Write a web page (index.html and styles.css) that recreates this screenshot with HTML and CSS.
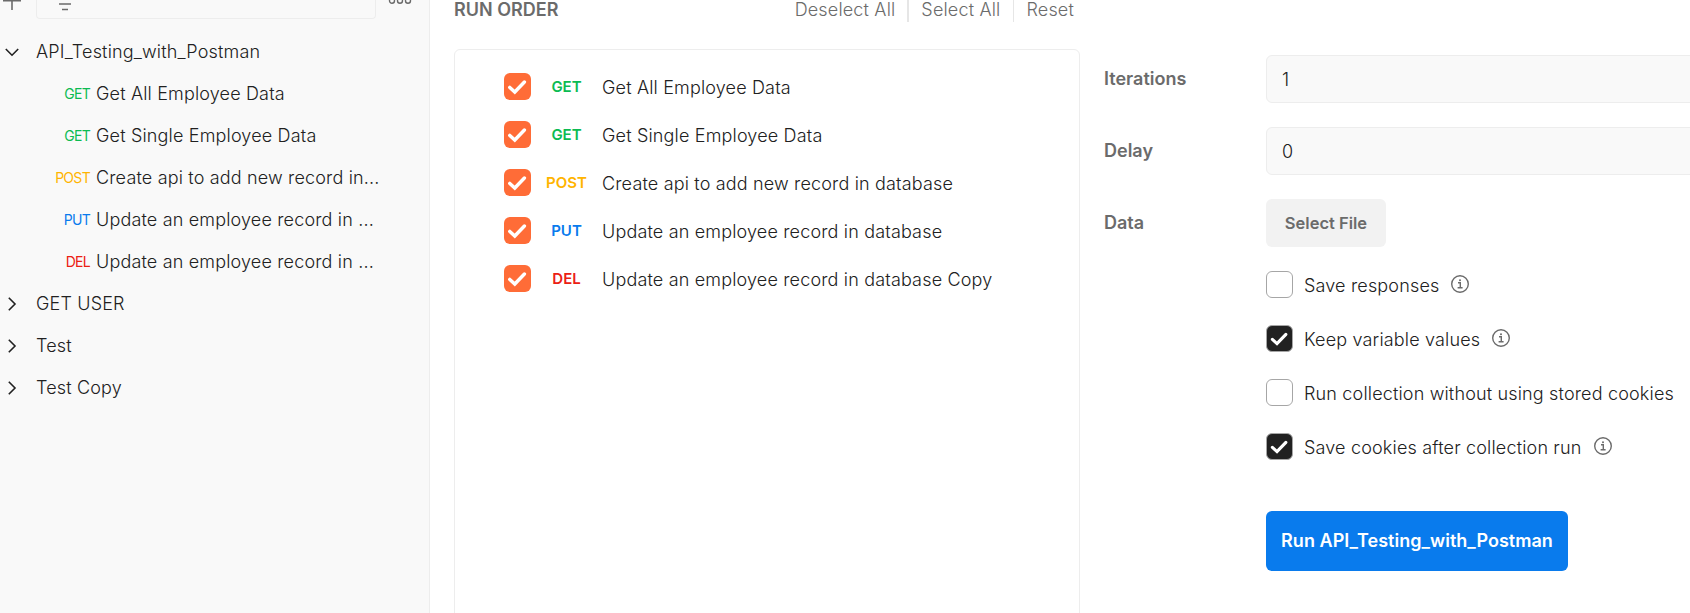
FILE: index.html
```html
<!DOCTYPE html>
<html lang="en">
<head>
<meta charset="utf-8">
<title>Collection Runner</title>
<link rel="stylesheet" href="styles.css">
</head>
<body>
<svg class="defs" width="0" height="0">
  <symbol id="check" viewBox="0 0 27 27"><path d="M5.8 14.4L10.8 19L20.4 9" fill="none" stroke="#fff" stroke-width="3.4" stroke-linecap="round"/></symbol>
  <symbol id="right" viewBox="0 0 24 24"><path d="M8.8 5.8L15 12L8.8 18.2" fill="none" stroke="#212121" stroke-width="1.6"/></symbol>
  <symbol id="down" viewBox="0 0 24 24"><path d="M5.8 9L12 15.2L18.2 9" fill="none" stroke="#212121" stroke-width="1.6"/></symbol>
  <symbol id="info" viewBox="0 0 20 20"><circle cx="10" cy="10" r="8.3" fill="none" stroke="#6b6b6b" stroke-width="1.4"/><path d="M8 8.8H10.3V13.6M7.6 13.7H12.6" fill="none" stroke="#6b6b6b" stroke-width="1.4"/><circle cx="10" cy="6.2" r="1" fill="#6b6b6b"/></symbol>
</svg>
<div class="app">
  <aside class="sidebar">
    <div class="toolbar">
      <svg class="plus" width="24" height="12" viewBox="0 0 24 12"><path d="M3 .8H21M12 0V10" fill="none" stroke="#6b6b6b" stroke-width="1.6"/></svg>
      <div class="search"><svg width="14" height="12" viewBox="0 0 14 12"><path d="M1 4H13M4 9.5H10" fill="none" stroke="#6b6b6b" stroke-width="1.5"/></svg></div>
      <svg class="more" width="24" height="6" viewBox="0 0 24 6"><g fill="none" stroke="#6b6b6b" stroke-width="1.4"><circle cx="4" cy=".8" r="2.5"/><circle cx="12" cy=".8" r="2.5"/><circle cx="20" cy=".8" r="2.5"/></g></svg>
    </div>
    <ul class="tree">
      <li class="folder"><svg><use href="#down"/></svg><span>API_Testing_with_Postman</span></li>
      <li class="request"><b class="get">GET</b><span>Get All Employee Data</span></li>
      <li class="request"><b class="get">GET</b><span>Get Single Employee Data</span></li>
      <li class="request"><b class="post">POST</b><span>Create api to add new record in...</span></li>
      <li class="request"><b class="put">PUT</b><span>Update an employee record in ...</span></li>
      <li class="request"><b class="del">DEL</b><span>Update an employee record in ...</span></li>
      <li class="folder"><svg><use href="#right"/></svg><span>GET USER</span></li>
      <li class="folder"><svg><use href="#right"/></svg><span>Test</span></li>
      <li class="folder"><svg><use href="#right"/></svg><span>Test Copy</span></li>
    </ul>
  </aside>
  <section class="order">
    <header class="order-head">
      <h2>RUN ORDER</h2>
      <nav><a>Deselect All</a><a>Select All</a><a>Reset</a></nav>
    </header>
    <ul class="order-list">
      <li><svg class="box orange"><use href="#check"/></svg><b class="get">GET</b><span>Get All Employee Data</span></li>
      <li><svg class="box orange"><use href="#check"/></svg><b class="get">GET</b><span>Get Single Employee Data</span></li>
      <li><svg class="box orange"><use href="#check"/></svg><b class="post">POST</b><span>Create api to add new record in database</span></li>
      <li><svg class="box orange"><use href="#check"/></svg><b class="put">PUT</b><span>Update an employee record in database</span></li>
      <li><svg class="box orange"><use href="#check"/></svg><b class="del">DEL</b><span>Update an employee record in database Copy</span></li>
    </ul>
  </section>
  <section class="settings">
    <div class="field"><label>Iterations</label><div class="input">1</div></div>
    <div class="field"><label>Delay</label><div class="input">0</div></div>
    <div class="field"><label>Data</label><div class="file">Select File</div></div>
    <div class="options">
      <div class="option"><i class="box empty"></i><span>Save responses</span><svg class="info"><use href="#info"/></svg></div>
      <div class="option"><svg class="box dark"><use href="#check"/></svg><span>Keep variable values</span><svg class="info"><use href="#info"/></svg></div>
      <div class="option"><i class="box empty"></i><span>Run collection without using stored cookies</span></div>
      <div class="option"><svg class="box dark"><use href="#check"/></svg><span>Save cookies after collection run</span><svg class="info"><use href="#info"/></svg></div>
    </div>
    <div class="run">Run API_Testing_with_Postman</div>
  </section>
</div>
</body>
</html>
```
FILE: styles.css
```css
* { box-sizing: border-box; }
body { margin: 0; background: #fff; overflow: hidden; color: #212121; font: 350 18px/24px Inter, "Liberation Sans", sans-serif; letter-spacing: .165px; }
ul { list-style: none; margin: 0; padding: 0; }
span, a, label, h2, b { white-space: nowrap; }
.defs { display: none; }
.app { display: flex; width: 1690px; height: 613px; overflow: hidden; }
.get { color: #0cbb52; }
.post { color: #ffb400; }
.put { color: #097bed; }
.del { color: #eb2013; }

.sidebar { width: 430px; flex: none; background: #f9f9f9; border-right: 1px solid #ededed; }
.toolbar { display: flex; height: 31px; align-items: flex-start; }
.plus { margin-right: 12px; flex: none; }
.search { width: 340px; height: 19px; padding-left: 21px; border: 1px solid #ededed; border-top: 0; border-radius: 0 0 4px 4px; }
.search svg { display: block; }
.more { margin-left: 12px; }
.tree li { display: flex; align-items: center; height: 42px; }
.folder svg { width: 24px; height: 24px; margin-right: 12px; }
.request b { width: 90px; text-align: right; font-size: 14px; font-weight: 400; letter-spacing: -.7px; }
.request span { margin-left: 6px; }

.order { width: 626px; flex: none; margin-left: 24px; }
.order-head { display: flex; justify-content: space-between; height: 49px; padding-right: 6px; }
.order-head h2 { margin: -2px 0 0; font-size: 18px; line-height: 24px; font-weight: 600; letter-spacing: 0; color: #6b6b6b; }
.order-head nav { display: flex; color: #6b6b6b; }
.order-head a { height: 22px; line-height: 20px; }
.order-head a + a { margin-left: 13px; padding-left: 12px; border-left: 1px solid #e6e6e6; }
.order-head a:nth-child(2) { margin-left: 12px; border-left-width: 2px; }
.order-list { height: 580px; padding: 12px 0 0 49px; border: 1px solid #ededed; border-radius: 6px; }
.order-list li { display: flex; align-items: center; height: 48px; }
.order-list b { width: 71px; padding-top: 2px; text-align: center; font-size: 15px; font-weight: 600; letter-spacing: 0; }
.order-list span { padding-top: 4px; }

.box { display: block; width: 27px; height: 27px; flex: none; border-radius: 6px; }
.orange { background: #ff6c37; }
.dark { background: #212121; border: 1px solid #a6a6a6; }
.empty { background: #fff; border: 1px solid #a6a6a6; }

.settings { flex: none; width: 620px; margin-left: 24px; padding-top: 55px; }
.field { display: flex; height: 48px; margin-bottom: 24px; }
.field label { width: 162px; line-height: 47px; font-weight: 600; letter-spacing: 0; color: #6b6b6b; }
.input { flex: 1; padding-left: 15px; line-height: 48px; background: #f9f9f9; border: 1px solid #ededed; border-radius: 6px; }
.file { width: 120px; text-align: center; line-height: 49px; font-size: 16.5px; font-weight: 600; letter-spacing: 0; color: #6b6b6b; background: #f2f2f2; border-radius: 6px; }
.options { margin-left: 162px; }
.option { display: flex; align-items: flex-start; height: 54px; }
.option span { margin-left: 11px; line-height: 30px; }
.info { width: 20px; height: 20px; margin: 3px 0 0 11px; }
.run { width: 302px; height: 60px; margin: 24px 0 0 162px; text-align: center; line-height: 60px; font-weight: 600; letter-spacing: .03px; color: #fff; background: #097bed; border-radius: 6px; }
```
